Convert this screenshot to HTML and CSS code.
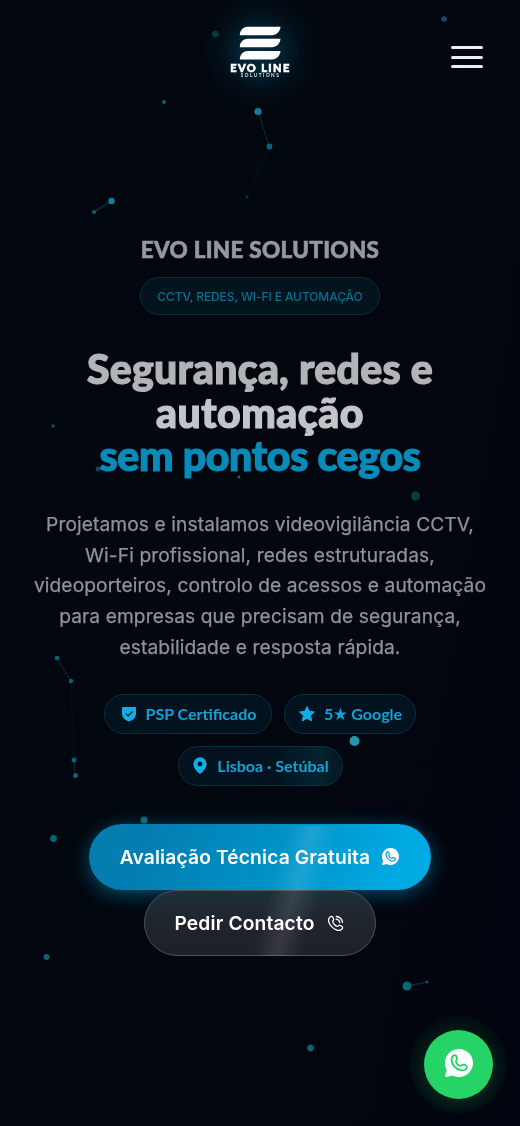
FILE: index.html
```html
<!DOCTYPE html>
<html lang="pt">
<head>
<meta charset="utf-8">
<meta name="viewport" content="width=device-width, initial-scale=1">
<title>Evo Line Solutions</title>
<link rel="stylesheet" href="styles.css">
</head>
<body>
<svg class="particles" viewBox="0 0 520 1126" aria-hidden="true">
  <g class="links">
    <path d="M258 111 269 146"/><path d="M269 146 247 197" opacity=".35"/>
    <path d="M111 201 94 212" stroke-width="1.500"/>
    <path d="M57 658 71 681"/><path d="M71 681 74 760" opacity=".3"/><path d="M74 760 75 775"/><path d="M75 775 53 838" opacity=".2"/>
    <path d="M407 986 427 982" stroke-width="1.500"/>
    <path d="M328 650 355 741 341 780" opacity=".15"/>
  </g>
  <g class="dots">
    <circle cx="215.500" cy="34" r="3.200" opacity=".7"/><circle cx="444" cy="19" r="2.800" opacity=".8"/>
    <circle cx="164" cy="102" r="2"/><circle cx="258" cy="111.500" r="3.600" class="bright"/>
    <circle cx="269.500" cy="146.500" r="2.900"/><circle cx="247" cy="197" r="1.500" opacity=".5"/>
    <circle cx="111.500" cy="201" r="3.200" class="bright"/><circle cx="94" cy="212" r="2"/>
    <circle cx="53" cy="426" r="1.700" opacity=".8"/><circle cx="98" cy="469" r="2.500" opacity=".7"/>
    <circle cx="239" cy="477" r="1.500"/><circle cx="415.500" cy="496" r="4.500" opacity=".55"/>
    <circle cx="57" cy="658" r="2.300"/><circle cx="71" cy="681" r="2.200"/>
    <circle cx="74" cy="760" r="2.500"/><circle cx="75.500" cy="775.500" r="2.500"/>
    <circle cx="53.500" cy="838.500" r="3.400"/><circle cx="144" cy="820" r="3.600"/>
    <circle cx="46.500" cy="957" r="2.900"/><circle cx="407" cy="986" r="4.500"/>
    <circle cx="427" cy="982" r="1.500" opacity=".8"/><circle cx="310.500" cy="1048" r="3.300"/>
    <circle cx="329" cy="651" r="2"/>
    <circle cx="354.500" cy="741" r="5" class="hot"/>
  </g>
</svg>

<header class="topbar">
  <a class="logo" href="#">
    <svg class="logo-mark" viewBox="0 0 42 34" aria-hidden="true">
      <path d="M.8 9.200C.8 4.500 4 .8 8.500 .8H41.500C41.200 5.500 37.500 9.200 33 9.200Z"/>
      <path d="M.8 21.200C.8 16.500 4 12.800 8.500 12.800H41.500C41.200 17.500 37.500 21.200 33 21.200Z"/>
      <path d="M.8 33.400C.8 28.700 4 25 8.500 25H41.500C41.200 29.700 37.500 33.400 33 33.400Z"/>
    </svg>
    <span class="logo-name">EVO LINE</span>
    <span class="logo-sub">SOLUTIONS</span>
  </a>
  <button class="menu" aria-label="Menu"><span></span><span></span><span></span></button>
</header>

<main class="hero">
  <p class="brand">EVO LINE SOLUTIONS</p>
  <p class="tag"><span>CCTV, REDES, WI-FI E AUTOMAÇÃO</span></p>
  <h1 class="title">
    <span class="line l1">Segurança, redes e</span>
    <span class="line l2">automação</span>
    <span class="line l3">sem pontos cegos</span>
  </h1>
  <p class="lead">Projetamos e instalamos videovigilância CCTV,<br>Wi-Fi profissional, redes estruturadas,<br>videoporteiros, controlo de acessos e automação<br>para empresas que precisam de segurança,<br>estabilidade e resposta rápida.</p>
  <ul class="badges">
    <li class="badge psp">
      <svg viewBox="0 0 18 18" aria-hidden="true"><path d="M3 2H15Q16 2 16 3V8.500C16 12.800 13 15.300 9 16.500C5 15.300 2 12.800 2 8.500V3Q2 2 3 2Z"/><path class="check" d="M6 8.900 8.100 10.900 12 7"/></svg>
      <span>PSP Certificado</span>
    </li>
    <li class="badge google">
      <svg viewBox="0 0 18 18" aria-hidden="true"><path class="soft" d="M9 1.600 11.200 6.300 16.400 7 12.600 10.500 13.600 15.900 9 13.300 4.400 15.900 5.400 10.500 1.600 7 6.800 6.300Z"/></svg>
      <span>5<span class="star">★</span> Google</span>
    </li>
    <li class="badge place">
      <svg viewBox="0 0 18 18" aria-hidden="true"><path fill-rule="evenodd" d="M9 .3A6.600 6.600 0 0 1 15.600 6.900C15.600 10.800 12.300 14.300 9 17C5.700 14.300 2.400 10.800 2.400 6.900A6.600 6.600 0 0 1 9 .3ZM9 4.500A2.400 2.400 0 1 0 9 9.300A2.400 2.400 0 1 0 9 4.500Z"/></svg>
      <span>Lisboa · Setúbal</span>
    </li>
  </ul>
  <div class="actions">
    <a class="btn primary" href="#"><span>Avaliação Técnica Gratuita</span>
      <svg viewBox="0 0 28 28" aria-hidden="true"><path class="bubble" d="M14 0A14 14 0 1 1 7.500 26.400L1.500 28Q-.3 28.200 .2 26.500L1.800 21A14 14 0 0 1 14 0Z"/><path class="phone" d="M9 6.400C10.500 5.700 11.500 7 12 9.300C12.300 10.800 10.500 11.300 11.100 13C11.800 15.100 13.500 16.500 15.200 16.900C16.700 17.200 17.100 15.600 18.600 15.700C20.600 15.900 22.300 17 21.900 18.500C21.200 20.900 18.300 22 15.500 21.100C11 19.800 7.300 16 6.600 11.500C6.300 9.200 7.300 7.200 9 6.400Z"/></svg>
    </a>
    <a class="btn ghost" href="#"><span>Pedir Contacto</span>
      <svg viewBox="0 0 18 18" aria-hidden="true"><path class="handset" d="M3.200 2.200C4.600 .8 5.600 1.400 6.700 3.400C7.400 4.800 7 5.500 6.300 6.300C5.600 7.200 6.500 8.600 7.800 10C9.200 11.400 10.700 12.400 11.600 11.700C12.400 11 13.200 10.700 14.500 11.300C16.500 12.300 17.200 13.400 15.800 14.800C14 17 11 16.500 8 14.800C5.800 13.500 4.300 12 3 9.800C1.300 6.900 1.200 4 3.200 2.200Z"/><path class="handset" d="M9.900 1.600C13.300 1.700 16.200 4.400 16.400 7.800M9.700 4.500C11.700 4.500 13.400 6.100 13.400 8.100"/></svg>
    </a>
  </div>
</main>
<div class="sheen"></div>
<a class="whatsapp" href="#" aria-label="WhatsApp">
  <svg viewBox="0 0 28 28" aria-hidden="true"><path class="bubble" d="M14 0A14 14 0 1 1 7.500 26.400L1.500 28Q-.3 28.200 .2 26.500L1.800 21A14 14 0 0 1 14 0Z"/><path class="phone" d="M9 6.400C10.500 5.700 11.500 7 12 9.300C12.300 10.800 10.500 11.300 11.100 13C11.800 15.100 13.500 16.500 15.200 16.900C16.700 17.200 17.100 15.600 18.600 15.700C20.600 15.900 22.300 17 21.900 18.500C21.200 20.900 18.300 22 15.500 21.100C11 19.800 7.300 16 6.600 11.500C6.300 9.200 7.300 7.200 9 6.400Z"/></svg>
</a>
</body>
</html>
```
FILE: styles.css
```css
* { box-sizing: border-box; }
body {
  margin: 0;
  height: 1126px;
  position: relative;
  overflow: hidden;
  background: linear-gradient(100deg, #02060f, #03070e 50%, #02040f);
  color: #fff;
  font-family: Inter, "Liberation Sans", sans-serif;
}
p, h1, ul { margin: 0; padding: 0; }
a { color: inherit; text-decoration: none; }
svg { display: block; flex: none; }

.particles { position: absolute; inset: 0; width: 520px; height: 1126px; z-index: -1; }
.links { stroke: #0d4756; stroke-width: 1; fill: none; opacity: .6; filter: blur(.4px); }
.dots { fill: #0c6577; filter: blur(.7px); }
.dots .bright { fill: #107f9d; }
.dots .hot { fill: #2597aa; }

.topbar {
  height: 115px;
  display: grid;
  grid-template-columns: 1fr auto 1fr;
  padding: 26px 37px 0;
  background: radial-gradient(circle 60px at 260px 51px, #032a3c 0, #032231 35%, rgba(3, 24, 36, .5) 65%, transparent 100%);
}
.logo { grid-column: 2; display: flex; flex-direction: column; align-items: center; width: 62px; }
.logo-mark { width: 42px; height: 34px; fill: #fff; }
.logo-name { margin-top: 3px; font: 900 11px/9px Lato, sans-serif; letter-spacing: 1.400px; margin-right: -1px; white-space: nowrap; -webkit-text-stroke: .6px #fff; }
.logo-sub { margin-top: 1px; font: 700 4.600px/5px Lato, sans-serif; letter-spacing: 1.500px; margin-right: -1px; color: #dce4e8; }
.menu { justify-self: end; align-self: start; display: flex; flex-direction: column; gap: 6.500px; padding: 0; margin-top: 20px; border: 0; background: none; }
.menu span { width: 32px; height: 3px; border-radius: 2px; background: #eceef2; }

.hero { display: flex; flex-direction: column; align-items: center; padding-top: 121px; }
.brand { font: 900 22.500px/28px Lato, sans-serif; letter-spacing: .3px; color: #96989e; white-space: nowrap; -webkit-text-stroke: .6px #96989e; }
.tag {
  margin-top: 13px;
  width: 240px;
  height: 38px;
  display: flex;
  align-items: center;
  justify-content: center;
  border: 1px solid #0a2e3b;
  border-radius: 19px;
  background: #03141f;
  color: #0b6d91;
  font-size: 12px;
  font-weight: 500;
  letter-spacing: -.1px;
  white-space: nowrap;
}
.title { margin-top: 32px; display: flex; flex-direction: column; align-items: center; font: 900 41px/43.500px Lato, sans-serif; color: #bcbdc2; white-space: nowrap; }
.line { -webkit-text-stroke: 1.200px currentColor; }
.l1 { color: #b3b4b8; letter-spacing: .25px; }
.l2 { color: #c4c5cb; letter-spacing: .5px; }
.l3 { color: #088bb9; letter-spacing: -.3px; }
.lead { margin-top: 31.500px; font-size: 19.200px; line-height: 30.720px; letter-spacing: .09px; text-align: center; color: #8f929c; white-space: nowrap; -webkit-text-stroke: .25px #8f929c; }
.badges { margin-top: 31px; width: 340px; display: flex; flex-wrap: wrap; justify-content: center; gap: 12px; list-style: none; }
.badge {
  height: 40px;
  display: flex;
  align-items: center;
  justify-content: center;
  gap: 8px;
  border: 1px solid #0a303e;
  border-radius: 20px;
  background: #03121f;
  color: #14a2d4;
  font: 700 16px/20px Lato, sans-serif;
  white-space: nowrap;
}
.badge svg { width: 18px; height: 18px; fill: #11aee2; }
.badge .check { fill: none; stroke: #03121f; stroke-width: 1.200; stroke-linecap: round; }
.badge .soft { stroke: #11aee2; stroke-width: 1; stroke-linejoin: round; }
.star { font: 17px/16px "DejaVu Sans", sans-serif; margin: 0 -.5px; }
.psp { width: 168px; }
.google { width: 132px; }
.place { width: 165px; background: linear-gradient(90deg, #03121f 60%, #042330 85%, #031822); }

.actions { margin-top: 38.500px; display: flex; flex-direction: column; align-items: center; }
.btn {
  height: 66px;
  display: flex;
  align-items: center;
  justify-content: center;
  gap: 12px;
  border-radius: 33px;
  font-size: 19.200px;
  font-weight: 600;
  letter-spacing: .15px;
  white-space: nowrap;
}
.btn svg { width: 17px; height: 17px; margin-bottom: 2px; }
.primary { width: 342px; padding-right: 1px; background: linear-gradient(110deg, #047db1 15%, #008fc3 50%, #00a9e2 88%); box-shadow: 0 4px 20px rgba(0, 160, 215, .48); }
.primary .phone { stroke-width: 2; stroke: #049ed1; }
.ghost { position: relative; width: 232px; padding-right: 2px; border: 1px solid #4b525a; background: linear-gradient(#1d303b, #20242d 50%, #1e1f29); }
.ghost svg { margin-bottom: 0; }
.handset { fill: none; stroke: #fff; stroke-width: 1.400; stroke-linecap: round; stroke-linejoin: round; }
.bubble { fill: #fff; }
.phone { fill: none; stroke: #25d366; stroke-width: 1.800; }

.sheen {
  position: absolute;
  left: 250px;
  top: 826px;
  width: 90px;
  height: 130px;
  background: linear-gradient(106deg, transparent 30%, rgba(255, 255, 255, .11) 50%, transparent 70%);
  pointer-events: none;
}
.whatsapp {
  position: absolute;
  right: 27px;
  bottom: 27px;
  width: 69px;
  height: 69px;
  display: grid;
  place-items: center;
  padding-bottom: 3px;
  border-radius: 50%;
  background: #25d366;
  box-shadow: 0 0 0 14px rgba(37, 211, 102, .045), 0 3px 18px rgba(37, 211, 102, .22);
}
.whatsapp svg { width: 28px; height: 28px; }
```
